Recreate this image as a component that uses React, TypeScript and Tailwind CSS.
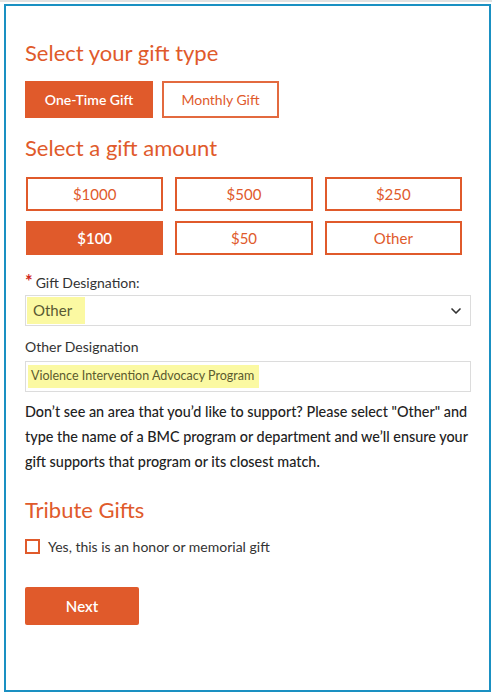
import { ChevronDown } from "lucide-react"

const amounts = ["$1000", "$500", "$250", "$100", "$50", "Other"]

export default function App() {
  const selected = "$100"

  return (
    <div className="min-h-[694px] bg-white border-t-2 border-[#e2e2e2] pt-[2px] pl-[4px]" style={{ fontFamily: "Lato, 'Open Sans', sans-serif" }}>
      <div className="w-[487px] h-[688px] border-2 border-[#1a90c2] px-[19px] pt-[32px]">
        {/* gift type */}
        <h2 className="text-[22px] leading-[30px] text-[#e05a2b]">Select your gift type</h2>
        <div className="mt-[13px] flex gap-[9px]">
          <button className="h-[37px] w-[128px] bg-[#e05a2b] text-white text-[14px] font-semibold">One-Time Gift</button>
          <button className="h-[37px] w-[117px] border-2 border-[#e36a3f] text-[#e05a2b] text-[14px]">Monthly Gift</button>
        </div>

        {/* amount */}
        <h2 className="mt-[15px] text-[22px] leading-[30px] text-[#e05a2b]">Select a gift amount</h2>
        <div className="mt-[14px] ml-[1px] w-[436px] grid grid-cols-3 gap-x-[12px] gap-y-[10px]">
          {amounts.map((a) =>
            a === selected ? (
              <button key={a} className="h-[34px] bg-[#e05a2b] text-white text-[15px] font-semibold">{a}</button>
            ) : (
              <button key={a} className="h-[34px] border-2 border-[#e05a2b] text-[#e05a2b] text-[15px]">{a}</button>
            )
          )}
        </div>

        {/* designation */}
        <div className="mt-[17px] flex items-start text-[14px] text-[#333]">
          <span className="text-[#d0281c] text-[18px] leading-[18px] font-bold mr-[3px]">*</span>
          <span className="leading-[20px] mt-[1px]">Gift Designation:</span>
        </div>
        <div className="mt-[2px] h-[31px] w-[446px] border border-[#dcdcdc] flex items-center justify-between pl-[1px] pr-[6px]">
          <span className="h-[27px] flex items-center bg-[#fbf9a2] px-[6px] pr-[13px] text-[15px] text-[#595933]">Other</span>
          <ChevronDown className="h-4 w-4 text-[#333]" strokeWidth={2.5} />
        </div>

        <div className="mt-[11px] text-[14px] leading-[20px] text-[#333]">Other Designation</div>
        <div className="mt-[4px] h-[31px] w-[446px] border border-[#dcdcdc] flex items-center pl-[2px]">
          <span className="h-[23px] flex items-center bg-[#fbf9a2] px-[3px] pr-[5px] text-[12.5px] text-[#5b5b2f]">Violence Intervention Advocacy Program</span>
        </div>

        <p className="mt-[7px] text-[14.4px] leading-[25px] font-medium text-[#222]">
          Don’t see an area that you’d like to support? Please select "Other" and type the name of a BMC program or department and we’ll ensure your gift supports that program or its closest match.
        </p>

        {/* tribute */}
        <h2 className="mt-[21px] text-[22px] leading-[30px] text-[#e05a2b]">Tribute Gifts</h2>
        <label className="mt-[11px] flex items-center gap-[8px] text-[14px] text-[#333]">
          <span className="h-[15px] w-[15px] border-2 border-[#e05a2b] bg-white" />
          <span>Yes, this is an honor or memorial gift</span>
        </label>

        <button className="mt-[30px] h-[38px] w-[114px] rounded-[2px] bg-[#e05a2b] text-white text-[15px] font-semibold">Next</button>
      </div>
    </div>
  )
}
